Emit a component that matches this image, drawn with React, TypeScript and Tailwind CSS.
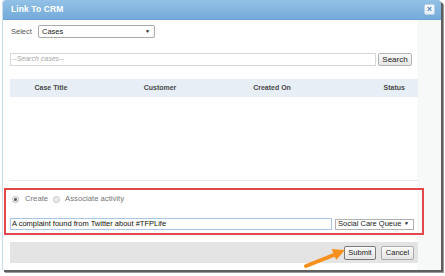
export default function App() {
  return (
    <div className="relative w-[445px] h-[276px] overflow-hidden bg-white font-['Liberation_Sans',Arial,sans-serif]">
      {/* Dialog */}
      <div className="ml-[2px] w-[439px] h-[270px] flex flex-col border-l border-[#c9dbea] rounded-t-[3px] bg-[linear-gradient(to_right,#ffffff_414px,#f7f8f8_414px)] shadow-[2px_2px_0_#5e5e5e,3px_3px_0_#9a9a9a]">
        {/* Title bar */}
        <div className="h-[20px] shrink-0 flex items-center justify-between pl-[8px] pr-[6px] rounded-t-[3px] bg-[linear-gradient(#93c1e7,#74abda)] border-b border-[#6aa2d2]">
          <span className="text-white font-bold text-[8.5px] tracking-[0.1px]">Link To CRM</span>
          <div className="w-[11px] h-[11px] flex items-center justify-center rounded-[2px] bg-[linear-gradient(#ffffff,#e4eef7)] border border-[#b9d2e8] text-[#4f86bd] font-bold text-[9px] leading-none">
            ×
          </div>
        </div>

        {/* Select row */}
        <div className="mt-[5px] ml-[8px] flex items-center h-[13px]">
          <span className="w-[27px] text-[7.5px] text-[#555]">Select</span>
          <div className="w-[117px] h-[13px] flex items-center justify-between pl-[3px] pr-[4px] border border-[#a9a9a9] rounded-[2px] bg-white">
            <span className="text-[7.5px] text-[#222]">Cases</span>
            <span className="text-[5px] text-[#111]">▼</span>
          </div>
        </div>

        {/* Search row */}
        <div className="mt-[15px] ml-[7px] flex items-center">
          <div className="w-[366px] h-[13px] flex items-center pl-[1px] border border-[#d8d8d8] bg-white">
            <span className="text-[7px] italic text-[#a8a8a8]">--Search cases--</span>
          </div>
          <div className="ml-[2px] w-[34px] h-[13px] flex items-center justify-center border border-[#b5b5b5] rounded-[2px] bg-[linear-gradient(#fafafa,#e6e6e6)] text-[8px] text-[#222]">
            Search
          </div>
        </div>

        {/* Results table */}
        <div className="mt-[13px] ml-[7px] w-[408px]">
          <div className="h-[18px] grid grid-cols-[82px_136px_88px_1fr] items-center bg-[#e8eef5] text-[7px] font-bold text-[#4a4a4a]">
            <span className="text-center">Case Title</span>
            <span className="text-center">Customer</span>
            <span className="text-center">Created On</span>
            <span className="text-right pr-[13px]">Status</span>
          </div>
          <div className="h-[84px] border-b border-[#e6e6e6]" />
        </div>

        {/* Create / associate panel (highlighted) */}
        <div className="mt-[7px] ml-[1px] w-[420px] h-[47px] flex flex-col border-2 border-[#e2474b] pl-[4px]">
          <div className="mt-[4px] h-[10px] flex items-center text-[7.7px] text-[#777]">
            <span className="ml-[2px] w-[7px] h-[7px] rounded-full border border-[#bdbdbd] bg-[#eeeeee] flex items-center justify-center">
              <span className="w-[3px] h-[3px] rounded-full bg-[#555]" />
            </span>
            <span className="ml-[6px]">Create</span>
            <span className="ml-[5px] w-[7px] h-[7px] rounded-full border border-[#c4c4c4] bg-[#ececec]" />
            <span className="ml-[5px]">Associate activity</span>
          </div>
          <div className="mt-[14px] flex items-center">
            <div className="w-[322px] h-[12px] flex items-center pl-[1px] border border-[#a6c6ea] bg-white text-[7.5px] text-[#111]">
              A complaint found from Twitter about #TFPLife
            </div>
            <div className="ml-[3px] w-[79px] h-[11px] flex items-center justify-between pl-[2px] pr-[4px] border border-[#b0b0b0] bg-white">
              <span className="text-[7.5px] text-[#222]">Social Care Queue</span>
              <span className="text-[5px] text-[#111]">▼</span>
            </div>
          </div>
        </div>

        {/* Footer buttons */}
        <div className="mt-[7px] ml-[7px] w-[408px] h-[21px] flex items-center justify-end gap-[5px] pr-[4px] bg-[#e4e4e4]">
          <div className="w-[32px] h-[14px] flex items-center justify-center border border-[#7a7a7a] rounded-[2px] bg-[linear-gradient(#fbfbfb,#e5e5e5)] text-[7.5px] text-[#222]">
            Submit
          </div>
          <div className="w-[33px] h-[14px] flex items-center justify-center border border-[#aaaaaa] rounded-[2px] bg-[linear-gradient(#fbfbfb,#e5e5e5)] text-[7.5px] text-[#222]">
            Cancel
          </div>
        </div>
      </div>

      {/* Orange annotation arrow */}
      <svg className="absolute left-0 top-0" width="445" height="276" viewBox="0 0 445 276">
        <line x1="306" y1="266" x2="335" y2="254.5" stroke="#f7901e" strokeWidth="4" strokeLinecap="round" />
        <polygon points="345,250 336.2,260.1 331.6,249" fill="#f7901e" />
      </svg>
    </div>
  );
}
